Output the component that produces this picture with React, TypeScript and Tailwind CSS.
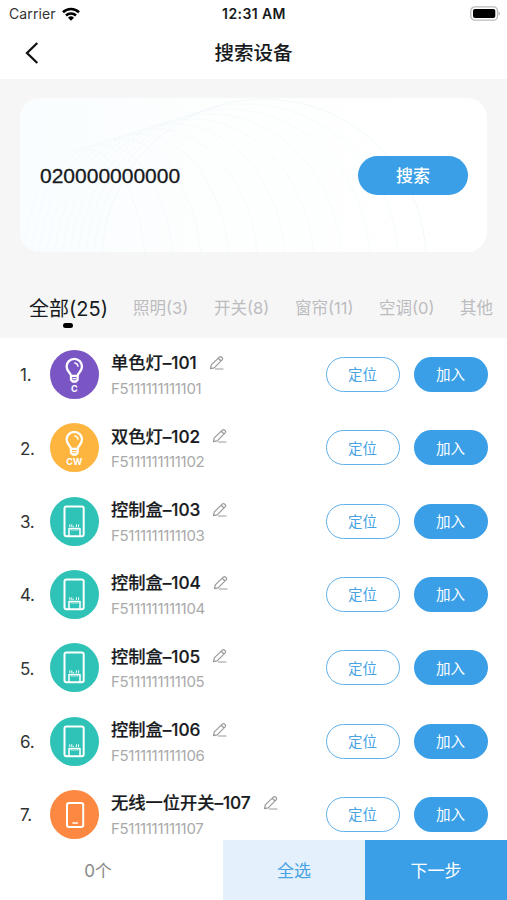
import React from "react";

type Kind = "c" | "cw" | "box" | "switch";

const devices: { id: number; name: string; kind: Kind }[] = [
  { id: 101, name: "单色灯", kind: "c" },
  { id: 102, name: "双色灯", kind: "cw" },
  { id: 103, name: "控制盒", kind: "box" },
  { id: 104, name: "控制盒", kind: "box" },
  { id: 105, name: "控制盒", kind: "box" },
  { id: 106, name: "控制盒", kind: "box" },
  { id: 107, name: "无线一位开关", kind: "switch" },
];

const kindColor: Record<Kind, string> = {
  c: "bg-[#7a56c4]",
  cw: "bg-[#fdb53f]",
  box: "bg-[#2fc2b6]",
  switch: "bg-[#fd8842]",
};

const tabs = [
  { label: "照明(3)", width: "w-[57px]" },
  { label: "开关(8)", width: "w-[57px]" },
  { label: "窗帘(11)", width: "w-[60px]" },
  { label: "空调(0)", width: "w-[57px]" },
  { label: "其他", width: "w-[34px]" },
];

function DeviceIcon({ kind }: { kind: Kind }) {
  return (
    <div className={`h-[49px] w-[49px] shrink-0 rounded-full ${kindColor[kind]}`}>
      <svg viewBox="0 0 49 49" className="h-[49px] w-[49px]" fill="none" stroke="#fff" strokeWidth="2.3" strokeLinejoin="round" strokeLinecap="round">
        {(kind === "c" || kind === "cw") && (
          <>
            <path d="M21 25.800c0-3-4.400-4.300-4.400-9.200a7.700 7.700 0 0 1 15.400 0c0 4.900-4.400 6.200-4.400 9.200z" />
            <path d="M21 25.800v4l1.600 1.700h3.400l1.600-1.700v-4" />
            <path d="M23 28.700h2.800" strokeWidth="1.200" />
            <path d="M24.800 13c1.700.2 2.900 1.400 3.200 3.200" strokeWidth="1.400" />
            <text
              x="24.300"
              y="42.200"
              textAnchor="middle"
              fill="#fff"
              stroke="none"
              className="font-['Inter',sans-serif] text-[9px] font-bold"
            >
              {kind === "c" ? "C" : "CW"}
            </text>
          </>
        )}
        {kind === "box" && (
          <>
            <rect x="14.500" y="9.500" width="19.200" height="29.800" rx="2" strokeWidth="2" />
            <path d="M19 39v-7.400h11v7.400" strokeWidth="1.500" />
            <path d="M19.800 29.500v-1.800M21.800 29.500v-1.800M23.200 29.500h.3M26.400 29.500v-1.800M28.600 29.500v-1.800" strokeWidth="1" />
            <path d="M21 31.500v1.600h7v-1.600" strokeWidth=".6" />
          </>
        )}
        {kind === "switch" && (
          <>
            <rect x="17" y="13" width="16.200" height="24" rx="2" strokeWidth="2" />
            <path d="M23 33h4.400" strokeWidth="1.600" />
          </>
        )}
      </svg>
    </div>
  );
}

function EditIcon() {
  return (
    <svg viewBox="0 0 16 16" className="h-4 w-4 shrink-0" fill="none" stroke="#999" strokeWidth="1.200" strokeLinejoin="round" strokeLinecap="round">
      <path d="M1.500 13.600l.8-3.700 8.200-8q.9-.8 1.900.1l.9.800q.9.900 0 1.800l-8.100 8.200zM9.500 3.500l2.500 2.500M6.500 14h7.500" />
    </svg>
  );
}

function CardPattern() {
  const rings = Array.from({ length: 11 }, (_, i) => i);
  return (
    <svg viewBox="0 0 467 154" className="absolute inset-0 h-full w-full" fill="none" stroke="#f2f8fb" strokeWidth="1">
      {rings.map((i) => (
        <ellipse key={i} cx={244 - i * 18} cy={162 + i * 2} rx={162 - i * 10} ry={161 - i * 3} strokeDasharray={i === 0 ? undefined : "3 1.5"} />
      ))}
    </svg>
  );
}

export default function App() {
  return (
    <div className="flex h-[900px] w-[507px] flex-col overflow-hidden bg-white font-['Inter','Noto_Sans_CJK_SC',sans-serif] text-[#171a20]">
      <header className="shrink-0">
        <div className="grid h-[27px] grid-cols-3 items-center pr-[6px] pl-[9px] text-[14px]">
          <div className="flex items-center gap-[6px] text-[#333]">
            <span className="tracking-[0.1px]">Carrier</span>
            <svg viewBox="0 0 18 14" className="h-[14px] w-[18px]" fill="none" stroke="#000" strokeWidth="2.600">
              <path d="M1 5.200a11.500 11.500 0 0 1 16 0M4 8.500a7.200 7.200 0 0 1 10 0" />
              <path d="M6 10.700a4.300 4.300 0 0 1 6 0l-3 3z" fill="#000" stroke="none" />
            </svg>
          </div>
          <span className="-mr-[3px] -ml-[5px] text-center text-[14px] font-semibold tracking-[0.4px] whitespace-nowrap">12:31 AM</span>
          <svg viewBox="0 0 31 15" className="h-[15px] w-[31px] justify-self-end">
            <rect x=".8" y=".8" width="26.700" height="13.400" rx="4" fill="#fff" stroke="#bbb" strokeWidth="1.300" />
            <rect x="3" y="3" width="22.300" height="9" rx="2" fill="#000" />
            <path d="M28.600 5.200q2.600 2.300 0 4.600z" fill="#aaa" />
          </svg>
        </div>
        <div className="grid h-[52px] grid-cols-[60px_1fr_60px] items-center">
          <svg viewBox="0 0 14 22" className="-mt-px ml-[25px] h-[22px] w-[14px]" fill="none" stroke="#111" strokeWidth="2.300">
            <path d="M12.300 1L2 11l10.300 10" />
          </svg>
          <h1 className="text-center text-[19.500px] leading-[52px] font-medium">搜索设备</h1>
        </div>
      </header>

      <section className="h-[259px] shrink-0 bg-[#f6f6f6] pt-[19px]">
        <div className="relative mx-5 flex h-[154px] items-center justify-between overflow-hidden rounded-[20px] bg-linear-to-r from-[#f9fdff] via-[#fdfefe] via-40% to-white pr-[19px] pl-5">
          <CardPattern />
          <span className="relative pt-px font-['Liberation_Sans',sans-serif] text-[21px] [-webkit-text-stroke:0.3px_#171a20]">020000000000</span>
          <button className="relative h-[39px] w-[110px] rounded-full bg-[#3a9fe7] pt-[3px] text-[17px] font-medium text-white">搜索</button>
        </div>

        <nav className="flex h-[86px] items-center pt-[27px] pl-[29px] whitespace-nowrap">
          <div className="relative mr-[25px] w-[79px] text-[20px] leading-[28px]">
            全部(25)
            <span className="absolute -bottom-[5px] left-[34px] h-[5px] w-[10px] rounded-full bg-black" />
          </div>
          <div className="flex gap-[24px] text-[16.500px] text-[#bcbcc0]">
            {tabs.map((tab) => (
              <span key={tab.label} className={tab.width}>
                {tab.label}
              </span>
            ))}
          </div>
        </nav>
      </section>

      <main className="min-h-0 flex-1 overflow-hidden">
        {devices.map((device, i) => (
          <div key={device.id} className="flex h-[73.330px] items-center pr-[19.500px] pl-5">
            <span className="w-[30px] pt-[3px] text-[17px] tracking-[-0.3px] text-[#333]">{i + 1}.</span>
            <DeviceIcon kind={device.kind} />
            <div className="ml-[12px] flex-1 pt-[3px]">
              <div className="flex h-[26px] items-center gap-[12px]">
                <span className="text-[17.300px] font-medium tracking-[-0.05px] whitespace-nowrap [-webkit-text-stroke:0.2px_#171a20]">
                  {device.name}–{device.id}
                </span>
                <EditIcon />
              </div>
              <div className="h-[26px] text-[15px] leading-[26px] tracking-[-0.300px] text-[#aaa]">F5111111111{device.id}</div>
            </div>
            <button className="mr-[14px] h-[35px] w-[74px] rounded-full border-[1.500px] border-[#62b0e9] pt-px text-[14.500px] text-[#48a3e3]">定位</button>
            <button className="h-[35px] w-[74px] rounded-full bg-[#3a9fe7] pt-px text-[14.500px] text-white">加入</button>
          </div>
        ))}
      </main>

      <footer className="grid h-[60px] shrink-0 grid-cols-[223px_142px_142px] text-[17px]">
        <div className="flex items-center justify-center pt-[3px] pr-[27px] text-[#888]">0个</div>
        <button className="bg-[#e4f0fc] pt-[3px] text-[#48a3e3]">全选</button>
        <button className="bg-[#3a9fe7] pt-[3px] text-white">下一步</button>
      </footer>
    </div>
  );
}
